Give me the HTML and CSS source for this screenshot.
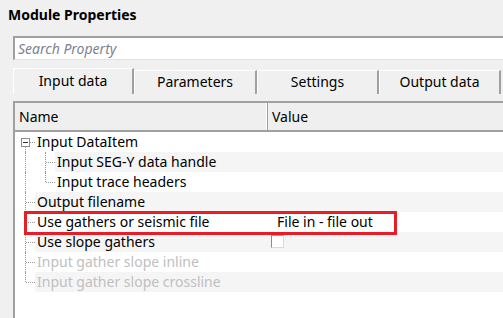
FILE: index.html
```html
<!DOCTYPE html>
<html lang="en">
<head>
<meta charset="UTF-8">
<meta name="viewport" content="width=device-width, initial-scale=1.0">
<title>Module Properties</title>
<link rel="stylesheet" href="styles.css">
</head>
<body>
<div class="module">
    <div class="module-title">Module Properties</div>
    <input type="text" class="search" placeholder="Search Property">

    <div class="tabs">
        <div class="tab active">Input data</div>
        <div class="tab">Parameters</div>
        <div class="tab">Settings</div>
        <div class="tab">Output data</div>
    </div>

    <div class="grid">
        <div class="grid-head">
            <div class="col-name">Name</div>
            <div class="col-value">Value</div>
        </div>

        <div class="row">
            <div class="name">
                <span class="gut root">
                    <svg width="9" height="9" viewBox="0 0 9 9"><rect x="0.5" y="0.5" width="8" height="8" fill="#fff" stroke="#8e8e8e"/><path d="M2 4.5h5" stroke="#333" stroke-width="1"/></svg>
                </span>
                <span class="label">Input DataItem</span>
            </div>
            <div class="value"></div>
        </div>
        <div class="row alt">
            <div class="name"><span class="gut pipe"></span><span class="gut"></span><span class="label">Input SEG-Y data handle</span></div>
            <div class="value"></div>
        </div>
        <div class="row">
            <div class="name"><span class="gut pipe"></span><span class="gut end"></span><span class="label">Input trace headers</span></div>
            <div class="value"></div>
        </div>
        <div class="row alt">
            <div class="name"><span class="gut"></span><span class="label">Output filename</span></div>
            <div class="value"></div>
        </div>
        <div class="row">
            <div class="name"><span class="gut"></span><span class="label">Use gathers or seismic file</span></div>
            <div class="value">File in - file out</div>
            <div class="callout"></div>
        </div>
        <div class="row alt">
            <div class="name"><span class="gut"></span><span class="label">Use slope gathers</span></div>
            <div class="value"><span class="check"></span></div>
        </div>
        <div class="row disabled">
            <div class="name"><span class="gut"></span><span class="label">Input gather slope inline</span></div>
            <div class="value"></div>
        </div>
        <div class="row alt disabled">
            <div class="name"><span class="gut end"></span><span class="label">Input gather slope crossline</span></div>
            <div class="value"></div>
        </div>
    </div>
</div>
</body>
</html>
```

FILE: styles.css
```css
body {
    margin: 0;
    background-color: #f0f0f0;
    font-family: "Noto Sans", "Open Sans", sans-serif;
    font-size: 14px;
    color: #000;
    overflow: hidden;
}
.module {
    width: 503px;
}
.module-title {
    height: 36px;
    box-sizing: border-box;
    padding: 5px 0 0 8px;
    line-height: 20px;
    font-weight: bold;
}
.search {
    display: block;
    box-sizing: border-box;
    width: 490px;
    height: 24px;
    margin: 0 0 8px 13px;
    padding: 0 0 0 3px;
    border: 2px solid #a0a0a0;
    border-right: none;
    border-bottom: 1px solid #e3e3e3;
    background: #fff;
    font-family: inherit;
    font-size: 14px;
    outline: none;
}
.search::placeholder {
    color: #7c8293;
    font-style: italic;
}
.tabs {
    display: flex;
    align-items: flex-end;
    height: 26px;
    margin-left: 13px;
}
.tab {
    box-sizing: border-box;
    width: 122px;
    height: 24px;
    border-top: 1px solid #fff;
    border-left: 1px solid #fff;
    border-right: 2px solid #a0a0a0;
    text-align: center;
    line-height: 22px;
}
.tab:first-child {
    width: 121px;
}
.tab:nth-child(2) {
    width: 123px;
}
.tab.active {
    height: 26px;
    line-height: 24px;
}
.grid {
    margin: 7px 0 0 13px;
    height: 215px;
    border-top: 2px solid #a0a0a0;
    border-left: 2px solid #a0a0a0;
    background: #fff;
    overflow: hidden;
}
.grid-head {
    display: flex;
    height: 27px;
    border-bottom: 2px solid #a0a0a0;
    background: #efefef;
    line-height: 27px;
}
.col-name {
    width: 248px;
    padding-left: 4px;
    border-right: 1px solid #a0a0a0;
    box-shadow: inset -1px 0 #fff;
    margin-right: 1px;
}
.col-value {
    padding-left: 3px;
}
.row {
    position: relative;
    display: grid;
    grid-template-columns: 256px 1fr;
    height: 20px;
    line-height: 20px;
}
.name {
    display: flex;
}
.label {
    flex: 1;
    padding-left: 2px;
    white-space: nowrap;
}
.value {
    padding-left: 6px;
}
.row.alt .label, .row.alt .value {
    background: #f5f5f5;
}
.row.disabled {
    color: #c0c0c0;
}
.gut {
    position: relative;
    flex: none;
    width: 20px;
    height: 20px;
}
.gut::before {
    content: "";
    position: absolute;
    left: 10px;
    top: 0;
    bottom: 0;
    border-left: 1px dotted #9a9a9a;
}
.gut::after {
    content: "";
    position: absolute;
    left: 11px;
    right: 0;
    top: 10px;
    border-top: 1px dotted #9a9a9a;
}
.gut.pipe::after {
    display: none;
}
.gut.end::before {
    bottom: 10px;
}
.gut.root::before {
    top: 15px;
}
.gut.root::after {
    left: 15px;
}
.gut.root svg {
    position: absolute;
    left: 6px;
    top: 6px;
}
.callout {
    position: absolute;
    z-index: 1;
    left: 9px;
    top: -1px;
    width: 373px;
    height: 24px;
    box-sizing: border-box;
    border: 3px solid #e81d25;
}
.check {
    display: block;
    width: 11px;
    height: 11px;
    margin: 3px 0 0 -6px;
    border: 1px solid;
    border-color: #a0a0a0 #dadada #dadada #8c8c8c;
    background: #fff;
}
```
